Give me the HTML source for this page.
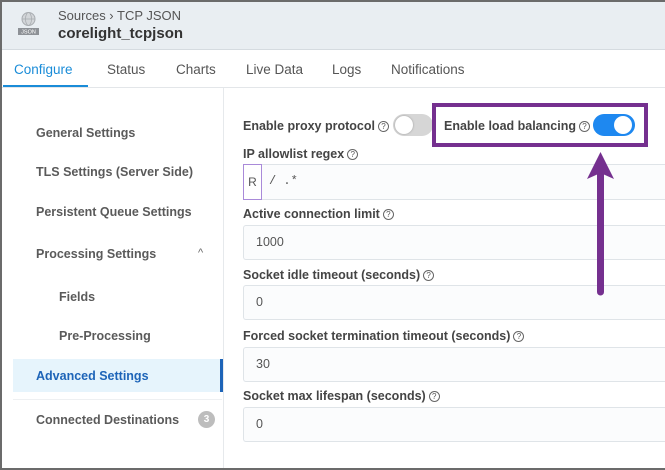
<!DOCTYPE html>
<html><head><meta charset="utf-8"><style>
*{box-sizing:border-box;margin:0;padding:0}
body{width:665px;height:470px;overflow:hidden;background:#fff;font-family:"Liberation Sans",sans-serif;position:relative}
.frame{position:absolute;left:0;top:0;width:665px;height:470px;border:2px solid #6b6b6b;border-right:none}
.hdr{position:absolute;left:2px;top:2px;right:0;height:48px;background:#e9eef2;border-bottom:1px solid #d5dbe0}
.t{position:absolute;white-space:nowrap}
.side{color:#5a5a5a;font-size:12.5px;font-weight:bold}
.lbl{color:#444;font-size:12.5px;font-weight:bold}
.inp{position:absolute;left:243px;right:0;border:1px solid #dfe4e8;border-right:none;background:#fbfcfd;color:#555;font-size:12.5px;padding-left:12px;border-radius:3px 0 0 3px}
.q{display:inline-block;width:11px;height:11px;border:1px solid #666;border-radius:50%;font-size:8px;text-align:center;line-height:10px;color:#555;font-weight:normal;vertical-align:1px;margin-left:3px}
</style></head><body>
<div class="hdr"></div>
<svg style="position:absolute;left:17px;top:11px" width="24" height="26">
<circle cx="11.5" cy="8" r="6.5" fill="#d3d6d9" stroke="#a9adb1" stroke-width="1"/>
<ellipse cx="11.5" cy="8" rx="3" ry="6.5" fill="none" stroke="#a9adb1" stroke-width="0.8"/>
<line x1="5" y1="8" x2="18" y2="8" stroke="#a9adb1" stroke-width="0.8"/>
<rect x="1" y="17" width="21" height="7" fill="#8d9196"/>
<text x="11.5" y="22.5" font-size="5.5" fill="#fff" text-anchor="middle" font-family="Liberation Sans">JSON</text>
</svg>
<div class="t" style="left:58px;top:8px;font-size:13px;color:#555">Sources › TCP JSON</div>
<div class="t" style="left:58px;top:25px;font-size:15px;color:#333;font-weight:bold">corelight_tcpjson</div>
<div class="t" style="left:14px;top:62px;font-size:13.5px;color:#1a8cd8">Configure</div>
<div style="position:absolute;left:3px;top:85px;width:85px;height:2px;background:#1a8cd8"></div>
<div class="t" style="left:107px;top:62px;font-size:13.5px;color:#555">Status</div>
<div class="t" style="left:176px;top:62px;font-size:13.5px;color:#555">Charts</div>
<div class="t" style="left:246px;top:62px;font-size:13.5px;color:#555">Live Data</div>
<div class="t" style="left:332px;top:62px;font-size:13.5px;color:#555">Logs</div>
<div class="t" style="left:391px;top:62px;font-size:13.5px;color:#555">Notifications</div>
<div style="position:absolute;left:2px;top:87px;right:0;height:1px;background:#e3e6e9"></div>
<div style="position:absolute;left:223px;top:88px;width:1px;height:382px;background:#e6e9ec"></div>
<div class="t side" style="left:36px;top:126px">General Settings</div>
<div class="t side" style="left:36px;top:165px">TLS Settings (Server Side)</div>
<div class="t side" style="left:36px;top:205px">Persistent Queue Settings</div>
<div class="t side" style="left:36px;top:247px">Processing Settings</div>
<div class="t" style="left:198px;top:247px;font-size:11px;color:#666">^</div>
<div class="t side" style="left:59px;top:290px">Fields</div>
<div class="t side" style="left:59px;top:329px">Pre-Processing</div>
<div style="position:absolute;left:13px;top:359px;width:209px;height:33px;background:#e6f4fc"></div>
<div style="position:absolute;left:220px;top:359px;width:3px;height:33px;background:#1d64b8"></div>
<div class="t" style="left:36px;top:369px;font-size:12.5px;font-weight:bold;color:#1d64b8">Advanced Settings</div>
<div style="position:absolute;left:13px;top:399px;width:209px;height:1px;background:#eef0f2"></div>
<div class="t side" style="left:36px;top:413px">Connected Destinations</div>
<div style="position:absolute;left:198px;top:411px;width:17px;height:17px;border-radius:50%;background:#bdbdbd;color:#fff;font-size:10px;text-align:center;line-height:17px;font-weight:bold">3</div>
<div class="t lbl" style="left:243px;top:119px">Enable proxy protocol<span class="q">?</span></div>
<div style="position:absolute;left:393px;top:114px;width:40px;height:22px;border-radius:11px;background:#d6d6d6"></div>
<div style="position:absolute;left:395px;top:116px;width:18px;height:18px;border-radius:50%;background:#fff;box-shadow:0 0 2px #999"></div>
<div class="t lbl" style="left:444px;top:119px">Enable load balancing<span class="q">?</span></div>
<div style="position:absolute;left:593px;top:114px;width:42px;height:22px;border-radius:11px;background:#1e88f0"></div>
<div style="position:absolute;left:614px;top:116px;width:18px;height:18px;border-radius:50%;background:#fff"></div>
<div style="position:absolute;left:432px;top:103px;width:216px;height:44px;border:4px solid #75308f"></div>
<div class="t lbl" style="left:243px;top:147px">IP allowlist regex<span class="q">?</span></div>
<div class="inp" style="top:164px;height:36px;padding-left:0"></div>
<div style="position:absolute;left:243px;top:164px;width:19px;height:36px;border:1px solid #a98ad9;background:#fff;color:#555;font-size:12px;text-align:center;line-height:34px">R</div>
<div class="t" style="left:269px;top:174px;font-family:'Liberation Mono',monospace;font-size:12px;color:#555">/ .*</div>
<div class="t lbl" style="left:243px;top:207px">Active connection limit<span class="q">?</span></div>
<div class="inp" style="top:225px;height:35px;line-height:33px">1000</div>
<div class="t lbl" style="left:243px;top:268px">Socket idle timeout (seconds)<span class="q">?</span></div>
<div class="inp" style="top:285px;height:35px;line-height:33px">0</div>
<div class="t lbl" style="left:243px;top:329px">Forced socket termination timeout (seconds)<span class="q">?</span></div>
<div class="inp" style="top:347px;height:35px;line-height:33px">30</div>
<div class="t lbl" style="left:243px;top:389px">Socket max lifespan (seconds)<span class="q">?</span></div>
<div class="inp" style="top:407px;height:35px;line-height:33px">0</div>
<svg style="position:absolute;left:0;top:0" width="665" height="470">
<line x1="600.5" y1="172" x2="600.5" y2="292" stroke="#75308f" stroke-width="7" stroke-linecap="round"/>
<polygon points="600.5,152 614,179 600.5,173 587,179" fill="#75308f"/>
</svg>
<div class="frame"></div>
</body></html>
